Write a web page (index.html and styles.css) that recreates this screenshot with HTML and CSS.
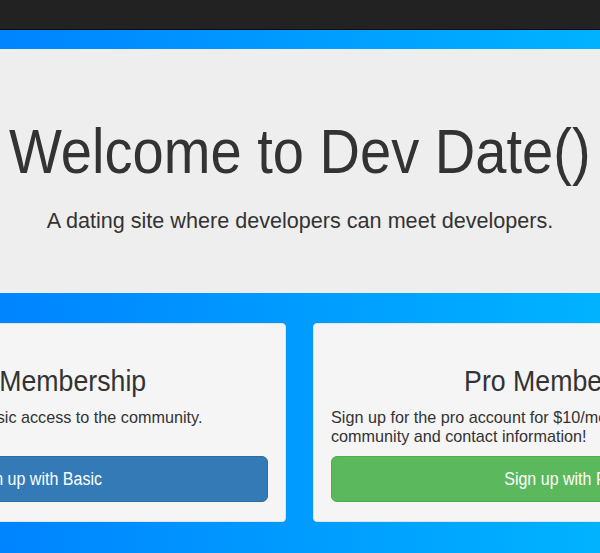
FILE: index.html
```html
<!DOCTYPE html>
<html lang="en">
<head>
<meta charset="utf-8">
<title>Dev Date()</title>
<link rel="stylesheet" href="styles.css">
</head>
<body>
<nav class="navbar"></nav>
<main class="page">
  <section class="jumbotron">
    <h1 class="jumbo-title"><span class="narrow">Welcome to Dev Date()</span></h1>
    <p class="jumbo-lead">A dating site where developers can meet developers.</p>
  </section>
  <div class="plans">
    <div class="well">
      <h2 class="plan-title"><span class="narrow">Basic Membership</span></h2>
      <p class="plan-text">Sign up for free and get basic access to the community.</p>
      <button class="btn btn-primary"><span class="narrow">Sign up with Basic</span></button>
    </div>
    <div class="well">
      <h2 class="plan-title"><span class="narrow">Pro Membership</span></h2>
      <p class="plan-text">Sign up for the pro account for $10/month to get access to the community and contact information!</p>
      <button class="btn btn-success"><span class="narrow">Sign up with Pro</span></button>
    </div>
  </div>
</main>
</body>
</html>
```
FILE: styles.css
```css
html, body {
  height: 100%;
}
body {
  margin: 0;
  overflow: hidden;
  font-family: "Liberation Sans", Arial, sans-serif;
  color: #333;
  background: linear-gradient(to right, #0084ff, #00b3ff);
  display: flex;
  flex-direction: column;
}
.navbar {
  height: 29px;
  background: #222;
  border-bottom: 1px solid #080808;
  flex: none;
}
.page {
  padding-top: 19px;
  display: flex;
  flex-direction: column;
  align-items: center;
}
.jumbotron {
  align-self: stretch;
  background: #eee;
  padding: 48px 0;
}
.narrow {
  display: inline-block;
  white-space: nowrap;
  transform: scaleX(0.89);
}
.jumbo-title {
  margin: 20px 0 20px;
  font-size: 63px;
  line-height: 69.3px;
  font-weight: 500;
  display: flex;
  justify-content: center;
}
.jumbo-lead {
  margin: 0 0 9px;
  font-size: 21.6px;
  line-height: 30px;
  display: flex;
  justify-content: center;
  white-space: nowrap;
}
.plans {
  flex: none;
  width: 1025px;
  margin: 30px 1px 0 0;
  display: grid;
  grid-template-columns: 499px 499px;
  column-gap: 27px;
}
.well {
  background: #f5f5f5;
  border: 1px solid #e3e3e3;
  border-radius: 4px;
  padding: 19px 17px;
  display: flex;
  flex-direction: column;
}
.plan-title {
  margin: 21px 0 11px;
  font-size: 30px;
  line-height: 33px;
  font-weight: 500;
  display: flex;
  justify-content: center;
}
.plan-text {
  margin: 0 0 10px;
  font-size: 16.2px;
  line-height: 19px;
}
.btn {
  margin-top: auto;
  display: flex;
  justify-content: center;
  width: 100%;
  padding: 10px 16px;
  font-family: inherit;
  font-size: 18px;
  line-height: 24px;
  border-radius: 6px;
  border: 1px solid transparent;
  color: #fff;
  cursor: pointer;
}
.btn-primary {
  background: #337ab7;
  border-color: #2e6da4;
}
.btn-success {
  background: #5cb85c;
  border-color: #4cae4c;
}
```
